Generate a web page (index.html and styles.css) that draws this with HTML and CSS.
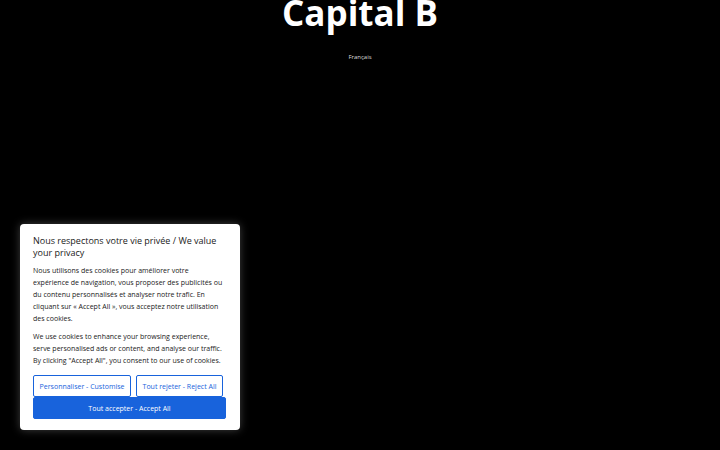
FILE: index.html
```html
<!DOCTYPE html>
<html lang="fr">
<head>
    <meta charset="UTF-8">
    <meta name="viewport" content="width=device-width, initial-scale=1.0">
    <title>Capital B</title>
    <link rel="stylesheet" href="styles.css">
</head>
<body>
    <header class="site-header">
        <h1 class="brand">Capital B</h1>
        <div class="lang">Français</div>
    </header>

    <div class="cookie-box">
        <p class="cookie-title">Nous respectons votre vie privée / We value your privacy</p>
        <p class="cookie-text">Nous utilisons des cookies pour améliorer votre expérience de navigation, vous proposer des publicités ou du contenu personnalisés et analyser notre trafic. En cliquant sur « Accept All », vous acceptez notre utilisation des cookies.</p>
        <p class="cookie-text">We use cookies to enhance your browsing experience, serve personalised ads or content, and analyse our traffic. By clicking "Accept All", you consent to our use of cookies.</p>
        <div class="btn-row">
            <button class="btn btn-outline">Personnaliser - Customise</button>
            <button class="btn btn-outline">Tout rejeter - Reject All</button>
        </div>
        <button class="btn btn-accept">Tout accepter - Accept All</button>
    </div>
</body>
</html>
```

FILE: styles.css
```css
body{
    margin: 0;
    background-color: #000;
    font-family: "Open Sans", sans-serif;
    height: 450px;
    overflow: hidden;
    position: relative;
}

.site-header{
    text-align: center;
    color: #fff;
}

.brand{
    margin: 0;
    margin-top: -11px;
    font-size: 35px;
    font-weight: 700;
    line-height: 48px;
}

.lang{
    font-size: 6px;
    margin-top: 16px;
    color: #ddd;
}

.cookie-box{
    position: absolute;
    left: 20px;
    bottom: 20px;
    width: 220px;
    box-sizing: border-box;
    background-color: #fff;
    border-radius: 4px;
    padding: 11px 17px 11px 13px;
    box-shadow: 0 0 8px rgba(255, 255, 255, 0.25);
}

.cookie-title{
    margin: 0 -6px 6px 0;
    font-size: 9px;
    line-height: 12px;
    font-weight: 500;
    color: #212121;
}

.cookie-text{
    margin: 0 0 6px 0;
    font-size: 7px;
    line-height: 12px;
    color: #212121;
}

.btn-row{
    display: flex;
    gap: 5px;
    margin-top: 8px;
}

.btn{
    font-family: "Open Sans", sans-serif;
    font-size: 7px;
    height: 22px;
    padding: 0;
    white-space: nowrap;
    border-radius: 2px;
    cursor: pointer;
}

.btn-outline{
    width: 98px;
    background-color: #fff;
    color: #1863dc;
    border: 1px solid #1863dc;
}

.btn-outline + .btn-outline{
    width: 87px;
}

.btn-accept{
    display: block;
    width: 193px;
    background-color: #1863dc;
    color: #fff;
    border: 1px solid #1863dc;
}
```
